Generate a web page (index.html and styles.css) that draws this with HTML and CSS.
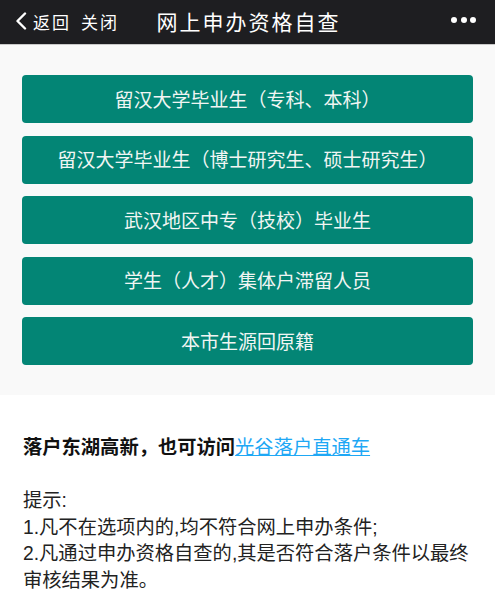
FILE: index.html
```html
<!DOCTYPE html>
<html lang="zh-CN">
<head>
<meta charset="utf-8">
<title>网上申办资格自查</title>
<link rel="stylesheet" href="styles.css">
</head>
<body>
<header class="navbar">
  <div class="nav-left">
    <svg class="back-icon" width="14" height="18" viewBox="0 0 14 18"><path d="M11 1.5 L3.5 9 L11 16.5" fill="none" stroke="#fff" stroke-width="2.4" stroke-linecap="round" stroke-linejoin="round"/></svg>
    <span class="nav-link">返回</span>
    <span class="nav-link close">关闭</span>
  </div>
  <div class="nav-title">网上申办资格自查</div>
  <div class="nav-more"><i></i><i></i><i></i></div>
</header>
<section class="options">
  <a class="opt">留汉大学毕业生（专科、本科）</a>
  <a class="opt">留汉大学毕业生（博士研究生、硕士研究生）</a>
  <a class="opt">武汉地区中专（技校）毕业生</a>
  <a class="opt">学生（人才）集体户滞留人员</a>
  <a class="opt">本市生源回原籍</a>
</section>
<section class="notes">
  <p class="visit">落户东湖高新，也可访问<a class="link">光谷落户直通车</a></p>
  <p class="tips">提示:<br>1.凡不在选项内的,均不符合网上申办条件;<br>2.凡通过申办资格自查的,其是否符合落户条件以最终审核结果为准。</p>
</section>
</body>
</html>
```

FILE: styles.css
```css
* { box-sizing: border-box; }
html, body { margin: 0; padding: 0; }
body {
  width: 495px;
  height: 596px;
  overflow: hidden;
  background: #fff;
  font-family: "Liberation Sans", "Noto Sans CJK SC", sans-serif;
}
.navbar {
  height: 45px;
  background: #1e1e21;
  border-bottom: 1px solid #c9c9c9;
  display: grid;
  grid-template-columns: 1fr auto 1fr;
  align-items: center;
  color: #fff;
}
.nav-left {
  display: flex;
  align-items: center;
  padding-left: 14px;
  padding-bottom: 2px;
}
.back-icon { display: block; margin-right: 5px; }
.nav-link {
  font-size: 17px;
  letter-spacing: 2px;
  font-family: "Noto Sans CJK SC", sans-serif;
}
.nav-link.close { margin-left: 10px; }
.nav-title {
  font-size: 21px;
  letter-spacing: 2px;
  margin-right: -2px;
  font-family: "Noto Sans CJK SC", sans-serif;
  padding-bottom: 2px;
}
.nav-more {
  display: flex;
  justify-content: flex-end;
  gap: 3.5px;
  padding-right: 19px;
  padding-bottom: 5px;
}
.nav-more i {
  width: 6px;
  height: 6px;
  border-radius: 50%;
  background: #fff;
}
.options {
  background: #f9f9f9;
  padding: 30px 22px 30px;
  display: flex;
  flex-direction: column;
  gap: 12.5px;
}
.opt {
  height: 48px;
  border-radius: 4px;
  background: #038575;
  color: #f1f5f3;
  font-size: 19px;
  font-family: "Noto Sans CJK SC", sans-serif;
  display: flex;
  align-items: center;
  justify-content: center;
  padding-bottom: 2px;
}
.notes {
  padding: 40px 23px 0;
  font-size: 19.3px;
  line-height: 26.5px;
  color: #222;
}
.notes p { margin: 0; }
.visit {
  font-weight: bold;
  color: #111;
  margin-bottom: 26.5px !important;
}
.link {
  color: #1ea8f5;
  text-decoration: underline;
  font-weight: normal;
}
```
